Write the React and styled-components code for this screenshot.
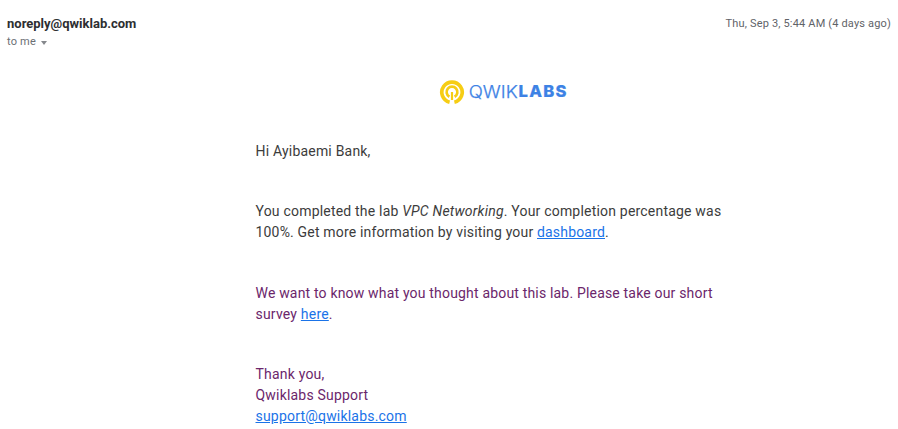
import React from "react";
import styled, { createGlobalStyle } from "styled-components";

const Global = createGlobalStyle`
  * { box-sizing: border-box; }
  body { margin: 0; background: #fff; font-family: Roboto, "Liberation Sans", sans-serif; overflow: hidden; }
`;
const Message = styled.main`
  width: 898px; height: 429px; overflow: hidden; background: #fff;
`;
const Header = styled.header`
  display: flex; justify-content: space-between; padding: 14px 7px 0 7px; height: 80px;
`;
const Sender = styled.div`
  font-size: 13px; line-height: 20px; font-weight: 700; color: #2d2e31;
`;
const Recipient = styled.div`
  display: flex; align-items: center; gap: 5px;
  font-size: 11px; line-height: 16px; letter-spacing: 0.2px; color: #6b6f74;
`;
const Caret = styled.span`
  border: 3.5px solid transparent; border-top: 4px solid #85888c; border-bottom: 0; margin-top: 1px;
`;
const Timestamp = styled.time`
  font-size: 11px; line-height: 20px; letter-spacing: 0.17px; color: #5f6368;
`;
const Logo = styled.svg`
  display: block; margin-left: 439px;
`;
const Body = styled.article`
  margin-left: 255.5px; padding-top: 36px;
  font-size: 14px; line-height: 21px; letter-spacing: 0.2px;
`;
const Paragraph = styled.p`
  margin: 0 0 ${(p) => p.$gap ?? 40}px; color: ${(p) => (p.$quoted ? "#6b266b" : "#3c3c3c")};
  white-space: nowrap;
`;
const Line = styled.span`
  display: block; letter-spacing: ${(p) => p.$tracking ?? 0.2}px;
`;
const Link = styled.a`
  color: #1a73e8; text-decoration: underline;
`;

export default function App() {
  return (
    <Message>
      <Global />
      <Header>
        <div>
          <Sender>noreply@qwiklab.com</Sender>
          <Recipient>to me <Caret /></Recipient>
        </div>
        <Timestamp>Thu, Sep 3, 5:44 AM (4 days ago)</Timestamp>
      </Header>
      <Logo width="130" height="25" viewBox="0 0 130 25" role="img" aria-label="Qwiklabs">
        <g fill="none" stroke="#f6cd14">
          <path d="M10.6 22.2A10.2 10.2 0 1 1 15.4 22.2" strokeWidth="3.7" />
          <path d="M10.4 16.8A5.4 5.4 0 1 1 15.6 16.8" strokeWidth="2.7" />
          <path d="M13 12V20" strokeWidth="2.2" />
        </g>
        <text x="29.7" y="17.5" fontFamily="Inter" fontWeight="300" fontSize="17" fill="#3d82e5" stroke="#3d82e5" strokeWidth="0.25" textLength="49" lengthAdjust="spacingAndGlyphs">QWIK</text>
        <text x="79.5" y="17.4" fontFamily="Inter" fontWeight="800" fontSize="16.6" fill="#3d82e5" stroke="#3d82e5" strokeWidth="0.2" textLength="48">LABS</text>
      </Logo>
      <Body>
        <Paragraph $gap={39}>Hi Ayibaemi Bank,</Paragraph>
        <Paragraph>
          <Line>You completed the lab <em>VPC Networking</em>. Your completion percentage was</Line>
          <Line $tracking={0.175}>100%. Get more information by visiting your <Link>dashboard</Link>.</Line>
        </Paragraph>
        <Paragraph $quoted $gap={39}>
          <Line $tracking={0.18}>We want to know what you thought about this lab. Please take our short</Line>
          <Line>survey <Link>here</Link>.</Line>
        </Paragraph>
        <Paragraph $quoted>
          Thank you,<br />Qwiklabs Support<br /><Link>support@qwiklabs.com</Link>
        </Paragraph>
      </Body>
    </Message>
  );
}
